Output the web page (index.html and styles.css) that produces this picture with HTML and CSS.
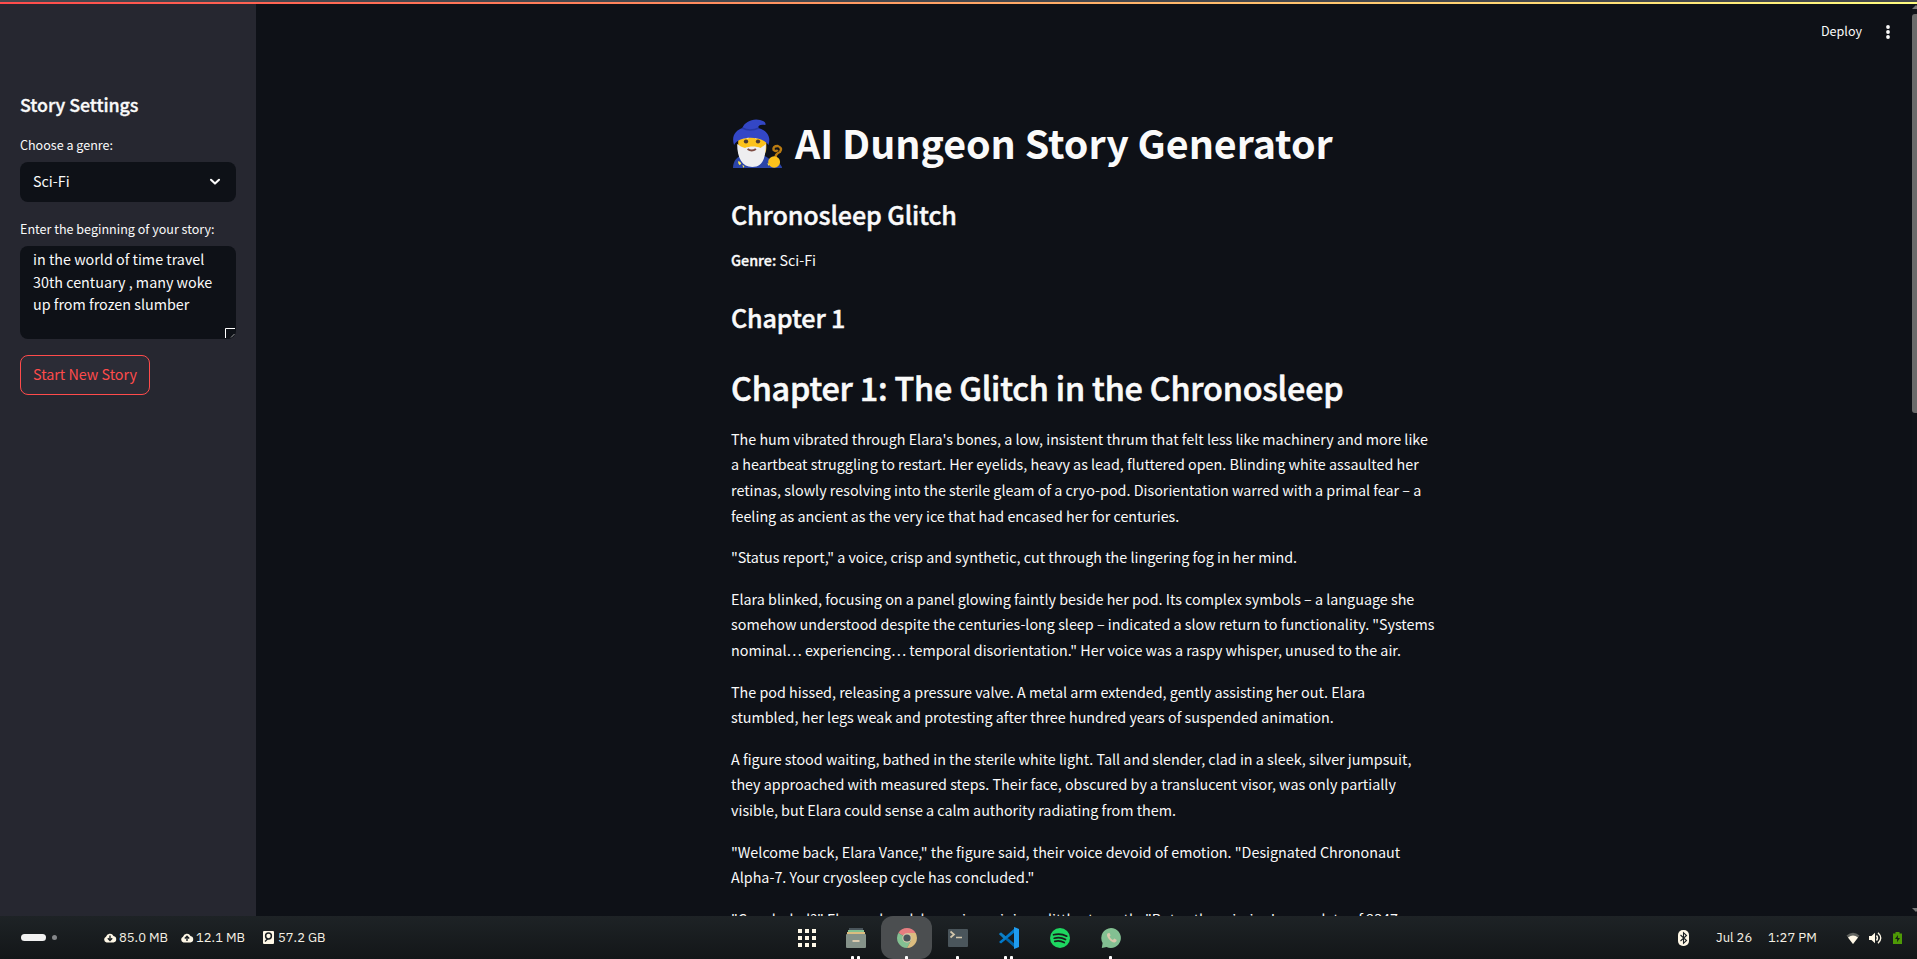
FILE: index.html
```html
<!DOCTYPE html>
<html lang="en">
<head>
<meta charset="utf-8">
<title>AI Dungeon Story Generator</title>
<link rel="stylesheet" href="styles.css">
</head>
<body>
<div class="desktop">
  <div class="app">
    <div class="accent"></div>
    <aside class="sidebar">
      <h2 class="side-title">Story Settings</h2>
      <div class="label label-genre">Choose a genre:</div>
      <div class="select"><span>Sci-Fi</span>
        <svg width="12" height="8" viewBox="0 0 12 8"><path d="M2 1.8 6 5.6 10 1.8" fill="none" stroke="#fafafa" stroke-width="2.1" stroke-linecap="round" stroke-linejoin="round"/></svg>
      </div>
      <div class="label label-begin">Enter the beginning of your story:</div>
      <div class="textarea">
        <div>in the world of time travel</div><div>30th centuary , many woke</div><div>up from frozen slumber</div>
        <svg class="grip" width="11" height="11" viewBox="0 0 11 11"><path d="M.5 10V.5H10" fill="none" stroke="#fff"/><path d="M6 9.500 9.500 6" fill="none" stroke="#bbb" stroke-width=".8"/></svg>
      </div>
      <button class="start">Start New Story</button>
    </aside>
    <main class="main">
      <header class="toolbar"><span>Deploy</span>
        <svg width="6" height="16" viewBox="0 0 6 16" fill="#fafafa"><circle cx="3" cy="3" r="1.9"/><circle cx="3" cy="8" r="1.9"/><circle cx="3" cy="13" r="1.9"/></svg>
      </header>
      <article class="story">
        <h1 class="title">
          <svg class="wizard" width="50" height="50" viewBox="0 0 48 50" preserveAspectRatio="none">
            <path d="M0 49c0-7 4-12 10-13h16c7 1 12 5 13 13z" fill="#2b45a8"/>
            <path d="M33 49h14v-1c-2-4-5-6-9-5z" fill="#2b45a8"/>
            <path d="M5 17h27v12c0 7-5 11-13.500 11S5 36 5 29z" fill="#fcc21b"/>
            <path d="M4 25c0 14 5 23 14.500 23 10 0 13-9 13-23-2 2-4 3-5 4-4-2-11-2-15 0-3-1-5-2-7.500-4z" fill="#eeeef0"/>
            <path d="M14 30q4 3 8 0" fill="none" stroke="#7d4b42" stroke-width="2"/>
            <circle cx="12.500" cy="22.500" r="2.100" fill="#4a3830"/><circle cx="24" cy="22.500" r="2.100" fill="#4a3830"/>
            <path d="M9 19q3-2 6 0M21 19q3-2 6 0" stroke="#f1f1f3" stroke-width="2" fill="none"/>
            <path d="M1 26C-2 17 3 11 9 9 11 3 19-1 26 1 30 2 32 4 31 6c-4-1-7 0-7 3 8 2 13 8 10 17-5-9-28-10-33 0z" fill="#3347c6"/>
            <path d="M9 9q7 4 16 0" stroke="#2638a6" stroke-width="1.500" fill="none"/>
            <path d="M41 40q-1-5 4-7 3-4-2-6-5 0-4 4 2 2 4 0" fill="none" stroke="#b97b12" stroke-width="2.400"/>
            <ellipse cx="39.500" cy="43" rx="5.700" ry="5.700" fill="#fcc21b"/>
            <path d="m5 42 2 1 1 2-2 1-1-2zM9 46l2 1-1 2zM33 44l2 1-1 2z" fill="#fce94f"/>
          </svg><span>AI Dungeon Story Generator</span></h1>
        <h2 class="h2 name">Chronosleep Glitch</h2>
        <p class="genre"><b>Genre:</b> Sci-Fi</p>
        <h2 class="h2 chap">Chapter 1</h2>
        <h1 class="h1">Chapter 1: The Glitch in the Chronosleep</h1>
        <p>The hum vibrated through Elara's bones, a low, insistent thrum that felt less like machinery and more like<br>a heartbeat struggling to restart. Her eyelids, heavy as lead, fluttered open. Blinding white assaulted her<br>retinas, slowly resolving into the sterile gleam of a cryo-pod. Disorientation warred with a primal fear – a<br>feeling as ancient as the very ice that had encased her for centuries.</p>
        <p>"Status report," a voice, crisp and synthetic, cut through the lingering fog in her mind.</p>
        <p>Elara blinked, focusing on a panel glowing faintly beside her pod. Its complex symbols – a language she<br>somehow understood despite the centuries-long sleep – indicated a slow return to functionality. "Systems<br>nominal… experiencing… temporal disorientation." Her voice was a raspy whisper, unused to the air.</p>
        <p>The pod hissed, releasing a pressure valve. A metal arm extended, gently assisting her out. Elara<br>stumbled, her legs weak and protesting after three hundred years of suspended animation.</p>
        <p>A figure stood waiting, bathed in the sterile white light. Tall and slender, clad in a sleek, silver jumpsuit,<br>they approached with measured steps. Their face, obscured by a translucent visor, was only partially<br>visible, but Elara could sense a calm authority radiating from them.</p>
        <p>"Welcome back, Elara Vance," the figure said, their voice devoid of emotion. "Designated Chrononaut<br>Alpha-7. Your cryosleep cycle has concluded."</p>
        <p>"Concluded?" Elara echoed, her voice gaining a little strength. "But… the mission's own date of 2347</p>
      </article>
      <div class="scrollbar"><i class="arrow up"></i><i class="thumb"></i><i class="arrow down"></i></div>
    </main>
  </div>
  <footer class="panel">
    <div class="left">
      <i class="pill"></i><i class="dot"></i>
      <span class="stat s1"><svg width="14" height="10" viewBox="0 0 14 10"><path d="M3.500 9.500a3 3 0 0 1-.5-5.700A4 4 0 0 1 10.500 3a3.300 3.300 0 0 1 0 6.500z" fill="#fff8e7"/><path d="M7 2.500V7M4.800 5.200 7 7.500 9.200 5.200" stroke="#1b2023" stroke-width="1.400" fill="none"/></svg><span>85.0 MB</span></span>
      <span class="stat s2"><svg width="14" height="10" viewBox="0 0 14 10"><path d="M3.500 9.500a3 3 0 0 1-.5-5.700A4 4 0 0 1 10.500 3a3.300 3.300 0 0 1 0 6.500z" fill="#fff8e7"/><path d="M7 8V3.500M4.800 5.500 7 3.200 9.200 5.500" stroke="#1b2023" stroke-width="1.400" fill="none"/></svg><span>12.1 MB</span></span>
      <span class="stat s3"><svg width="11" height="13" viewBox="0 0 11 13"><rect width="11" height="13" rx="1" fill="#fff8e7"/><circle cx="5.500" cy="5" r="2.900" fill="none" stroke="#1b2023" stroke-width="1.500"/><path d="M2 10.500 5 7.500" stroke="#1b2023" stroke-width="1.300"/></svg><span>57.2 GB</span></span>
    </div>
    <nav class="dock">
      <span class="item"><svg width="20" height="20" viewBox="0 0 20 20" fill="#fff8e7"><path d="M1 1h4v4H1zM8 1h4v4H8zM15 1h4v4h-4zM1 8h4v4H1zM8 8h4v4H8zM15 8h4v4h-4zM1 15h4v4H1zM8 15h4v4H8zM15 15h4v4h-4z"/></svg></span>
      <span class="item"><svg width="20" height="20" viewBox="0 0 20 20"><path d="M3 0h14v3H3z" fill="#4a555b"/><path d="M2 2h16v3H2z" fill="#83c092"/><path d="M1 4h18v3H1z" fill="#dbbc7f"/><rect y="6" width="20" height="14" rx="1" fill="#859289"/><path d="M6.500 12h7v2h-7z" fill="#d9c9ad"/></svg><span class="marks"><b></b><b></b></span></span>
      <span class="item active"><svg width="20" height="20" viewBox="0 0 20 20"><path d="M10 10 1.340 5A10 10 0 0 1 18.660 5z" fill="#e67e80"/><path d="M10 10 1.340 5A10 10 0 0 0 10 20l4.500-8z" fill="#83c092"/><path d="M10 10 10 5h8.660A10 10 0 0 1 10 20l4-7.500z" fill="#dbbc7f"/><circle cx="10" cy="10" r="4.700" fill="#d3c6aa"/><circle cx="10" cy="10" r="3.600" fill="#4a555b"/></svg><span class="marks"><b></b></span></span>
      <span class="item"><svg width="20" height="20" viewBox="0 0 20 20"><rect y="1" width="20" height="18" rx="1" fill="#4a555b"/><path d="m2.500 3.500 3.500 3-3.500 3M8 9.500h6" stroke="#d3c6aa" stroke-width="1.700" fill="none"/></svg><span class="marks"><b></b></span></span>
      <span class="item"><svg width="22" height="22" viewBox="0 0 22 22"><path d="m1 7 2-1.500L17 17v4z" fill="#0065a9"/><path d="m1 15 2 1.500L17 5V1z" fill="#007acc"/><path d="m16 0 5 2v18l-5 2z" fill="#1f9cf0"/><path d="m1 7 2-1.500L9 10.500 6.500 12.500z" fill="#0e7fc4"/></svg><span class="marks"><b></b><b></b></span></span>
      <span class="item"><svg width="20" height="20" viewBox="0 0 20 20"><circle cx="10" cy="10" r="10" fill="#1ed760"/><path d="M3.500 6.800q7-2 13.300 1.400M4.200 10.200q6-1.700 11.300 1.300M4.800 13.300q5-1.200 9.500 1.200" fill="none" stroke="#171d1b" stroke-width="1.700" stroke-linecap="round"/></svg></span>
      <span class="item"><svg width="20" height="20" viewBox="0 0 20 20"><path d="M10 0a10 10 0 1 1-4.500 19L.8 20l.8-5A10 10 0 0 1 10 0z" fill="#83c092"/><path d="M6.800 5.200c-3 2 2.800 9.600 7 9.200 1.800-.4 2-2 1.700-2.600l-2.300-1.200-1.300 1.300c-1.500-.5-2.800-1.900-3.300-3.300l1-1.200-1-2.300z" fill="#d9c9ad"/></svg><span class="marks"><b></b></span></span>
    </nav>
    <div class="right">
      <svg class="bt" width="11" height="16" viewBox="0 0 11 16"><rect width="11" height="16" rx="5" fill="#fff8e7"/><path d="m2.500 5 6 5.500-3 2.800V2.700l3 2.800-6 5.500" fill="none" stroke="#1b2023" stroke-width="1.100"/></svg>
      <span class="date">Jul 26</span><span class="time">1:27 PM</span>
      <svg class="wifi" width="14" height="12" viewBox="0 0 14 12"><path d="M7 12 .5 3.500Q7-2 13.500 3.500z" fill="#61635f"/><path d="M7 12 2 5.400Q7 1.500 12 5.400z" fill="#fff8e7"/></svg>
      <svg class="vol" width="13" height="12" viewBox="0 0 13 12"><path d="M0 4h2.500L6 .7v10.600L2.500 8H0z" fill="#fff8e7"/><path d="M7.500 3.500q2 2.500 0 5M9 .8q5.500 5.200 0 10.400" fill="none" stroke="#fff8e7" stroke-width="1.400"/></svg>
      <svg class="bat" width="9" height="12" viewBox="0 0 9 12"><path d="M2.500 0h4v1.500H9V12H0V1.500h2.500z" fill="#4e9a06"/><path d="M5 3 2 7h2.200L4 10.300 7 6H4.800z" fill="#172013"/></svg>
    </div>
  </footer>
</div>
</body>
</html>
```
FILE: styles.css
```css
* { box-sizing: border-box; }
body { margin: 0; background: #000; overflow: hidden; }
.desktop { width: 1917px; height: 959px; display: flex; flex-direction: column; color: #fafafa; font-family: "Noto Sans CJK SC", "Noto Sans", sans-serif; font-size: 14.34px; white-space: nowrap; }
h1, h2, p { margin: 0; }
svg { display: block; flex: none; }
.app { position: relative; display: flex; height: 916px; overflow: hidden; }
.accent { position: absolute; top: 0; left: 0; right: 0; height: 4px; border-top: 2px solid #43474d; background: linear-gradient(90deg, #ff4b4b, #fffd80); z-index: 2; }
.sidebar { width: 256px; padding: 92px 20px 0; background: #262730; }
.side-title { font-size: 17.9px; font-weight: 500; -webkit-text-stroke: .35px #fafafa; letter-spacing: -.08px; line-height: 24px; }
.label { font-size: 12.55px; line-height: 21px; }
.label-genre { margin-top: 18px; }
.select { display: flex; align-items: center; justify-content: space-between; margin-top: 7px; height: 40px; padding: 0 15px 0 13px; border-radius: 8px; background: #0e1117; }
.select span { padding-bottom: 3px; }
.label-begin { margin-top: 16px; }
.textarea { position: relative; margin-top: 7px; height: 93px; padding: 2px 13px; border-radius: 8px; background: #0e1117; line-height: 22.5px; }
.grip { position: absolute; right: 0; bottom: 0; }
.start { display: block; margin-top: 16px; width: 130px; height: 40px; padding: 0 0 3px; border: 1px solid #ff4b4b; border-radius: 8px; background: #2b2c36; color: #ff4b4b; font: inherit; }
.main { position: relative; flex: 1; background: #0e1117; }
.toolbar { display: flex; justify-content: flex-end; align-items: center; gap: 23px; height: 64px; padding-right: 26px; font-size: 12.55px; }
.toolbar span { padding-bottom: 3px; }
.story { width: 736px; margin: 0 0 0 475px; padding-top: 52px; }
.title { display: flex; align-items: center; height: 53px; font-size: 39.4px; font-weight: 700; line-height: 53px; letter-spacing: -.04px; }
.title span { padding-bottom: 2px; }
.wizard { margin: 2px 12px 0 2px; }
.h2 { font-size: 25.1px; font-weight: 500; -webkit-text-stroke: .45px #fafafa; letter-spacing: -.12px; line-height: 34px; }
.name { margin-top: 28px; }
.genre { margin-top: 16px; }
.genre b { font-weight: 500; -webkit-text-stroke: .35px #fafafa; }
.chap { margin-top: 27px; }
.h1 { margin-top: 32px; font-size: 32.3px; font-weight: 500; -webkit-text-stroke: .6px #fafafa; letter-spacing: -.17px; line-height: 43px; }
.story p { line-height: 25.6px; }
.story p:not(.genre) { margin-top: 16px; }
.story .h1 + p { margin-top: 17.3px; }
.scrollbar { position: absolute; top: 4px; right: 0; bottom: 0; width: 5px; background: #101319; }
.thumb { position: absolute; top: 10px; left: 0; width: 5px; height: 399px; border-radius: 3px 0 0 3px; background: #6b6b6b; }
.arrow { position: absolute; left: 0; border: 4px solid transparent; }
.up { top: -3px; border-bottom-color: #777; }
.down { bottom: 0; border-top-color: #777; }
.panel { display: grid; grid-template-columns: 781px 1fr 239px; height: 43px; background: linear-gradient(#1e2326, #131618); font-family: "IBM Plex Sans", "DejaVu Sans", sans-serif; font-size: 13px; color: #f5f0e4; }
.left, .right { display: flex; align-items: center; }
.left { padding-left: 21px; }
.pill { width: 25px; height: 7px; border-radius: 4px; background: #f2f2f2; }
.dot { width: 5px; height: 5px; margin-left: 6px; border-radius: 50%; background: #85878a; }
.stat { display: flex; align-items: center; gap: 2px; }
.stat span, .date, .time { padding-bottom: 1px; }
.s1 { margin-left: 46px; width: 77px; }
.s2 { width: 83px; }
.s3 { gap: 4px; }
.dock { display: flex; }
.item { position: relative; display: flex; align-items: center; justify-content: center; width: 51px; height: 43px; }
.item:first-child { margin-right: -2px; }
.marks { position: absolute; left: 0; right: 0; bottom: 0; display: flex; justify-content: center; gap: 3px; }
.marks b { width: 3px; height: 3px; background: #fff; border-radius: 1px 1px 0 0; }
.active { border-radius: 12px; background: #4b4e50; }
.date { margin-left: 27px; width: 37px; }
.time { margin-left: 15px; width: 49px; }
.wifi { margin-left: 29px; }
.vol { margin-left: 9px; }
.bat { margin-left: 11px; }
```
